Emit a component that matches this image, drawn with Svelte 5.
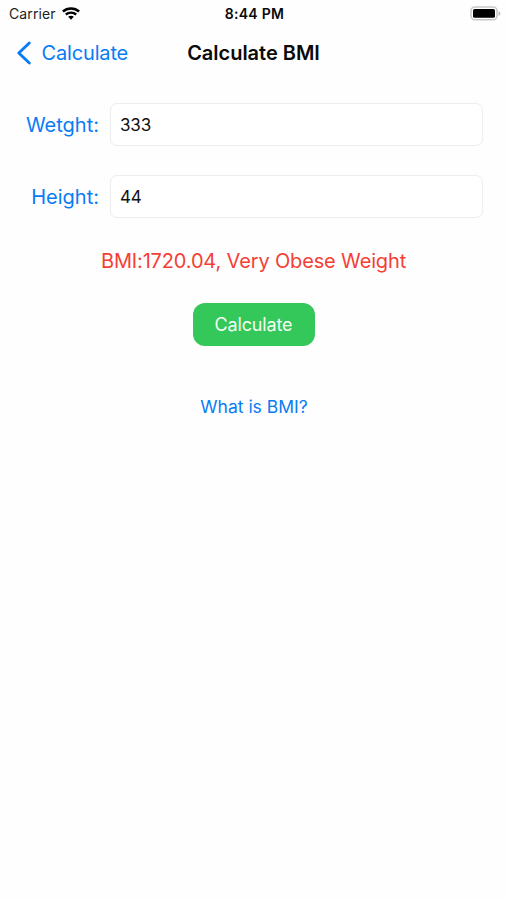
<script>
  let weight = $state('333');
  let height = $state('44');
</script>

<div class="screen">
  <header class="status">
    <div class="carrier">
      <span>Carrier</span>
      <svg width="18" height="14" viewBox="0 0 18 14" fill="none" stroke="#000">
        <path d="M.9 4.5C5.4.4 12.6.4 17.1 4.5" stroke-width="2.5" />
        <path d="M3.8 7.5c2.9-2.5 7.5-2.5 10.4 0" stroke-width="2.4" />
        <path d="M6.2 9.8c1.6-1.4 4-1.4 5.6 0L9 12.7z" fill="#000" stroke="none" />
      </svg>
    </div>
    <div class="time">8:44 PM</div>
    <div class="battery">
      <svg width="31" height="16" viewBox="0 0 31 16">
        <rect x="1" y="1" width="26" height="12.8" rx="4" fill="#fff" stroke="#c8c8c8" stroke-width="1.6" />
        <rect x="3" y="3" width="22" height="8.8" rx="1.6" fill="#000" />
        <path d="M28.6 5.2c2.2.7 2.2 4 0 4.7z" fill="#b5b5b5" />
      </svg>
    </div>
  </header>

  <nav class="bar">
    <a class="back" href="#back">
      <svg width="16" height="26" viewBox="0 0 16 26" fill="none">
        <path d="M13.3 3L2.8 13l10.5 10" stroke="#087cf5" stroke-width="2.9" stroke-linecap="round" stroke-linejoin="round" />
      </svg>
      <span>Calculate</span>
    </a>
    <h1>Calculate BMI</h1>
    <div></div>
  </nav>

  <main>
    <div class="row">
      <label for="weight">Wetght:</label>
      <input id="weight" bind:value={weight} />
    </div>
    <div class="row">
      <label for="height">Height:</label>
      <input id="height" bind:value={height} />
    </div>
    <p class="result">BMI:1720.04, Very Obese Weight</p>
    <button class="go">Calculate</button>
    <a class="what" href="#what">What is BMI?</a>
  </main>
</div>

<style>
  :global(body) {
    margin: 0;
    background: #fff;
  }
  .screen {
    width: 507px;
    height: 900px;
    overflow: hidden;
    background: #fefefe;
    font-family: Inter, 'Liberation Sans', sans-serif;
    color: #0a0a0a;
  }
  a {
    color: #087cf5;
    text-decoration: none;
  }
  .status {
    display: grid;
    grid-template-columns: 1fr auto 1fr;
    align-items: center;
    height: 27px;
    padding: 0 6px 0 9px;
    box-sizing: border-box;
    font-size: 14px;
  }
  .carrier {
    display: flex;
    align-items: center;
    gap: 6px;
    color: #222;
    letter-spacing: 0.12px;
  }
  .carrier svg,
  .battery svg,
  .back svg {
    display: block;
  }
  .time {
    font-weight: 600;
    letter-spacing: 0.3px;
    margin-right: 1px;
  }
  .battery {
    justify-self: end;
  }
  .bar {
    display: grid;
    grid-template-columns: 1fr auto 1fr;
    align-items: center;
    height: 50px;
    padding: 1px 16px 0;
    box-sizing: border-box;
  }
  .back {
    display: flex;
    align-items: center;
    gap: 9.5px;
    font-size: 20px;
    letter-spacing: -0.16px;
  }
  h1 {
    margin: 0;
    font-size: 20px;
    font-weight: 600;
    letter-spacing: -0.02px;
  }
  main {
    display: flex;
    flex-direction: column;
    padding-top: 26px;
  }
  .row {
    display: flex;
    align-items: center;
    height: 43px;
    margin-bottom: 29px;
  }
  label {
    width: 99px;
    margin-right: 11px;
    text-align: right;
    color: #087cf5;
    font-size: 20px;
  }
  input {
    width: 373px;
    height: 43px;
    box-sizing: border-box;
    padding: 0 9px;
    border: 1.5px solid #ededed;
    border-radius: 7px;
    outline: none;
    background: #fff;
    color: #111;
    font: 17px Inter, 'Liberation Sans', sans-serif;
    letter-spacing: -0.15px;
  }
  .result {
    margin: 0;
    height: 28px;
    line-height: 28px;
    text-align: center;
    font-size: 20px;
    letter-spacing: -0.15px;
    color: #f53f35;
  }
  .go {
    align-self: center;
    width: 122px;
    height: 43px;
    margin-top: 28px;
    border: 0;
    border-radius: 12px;
    background: #34c759;
    color: #f2fff5;
    font: 18px Inter, 'Liberation Sans', sans-serif;
    letter-spacing: -0.14px;
  }
  .what {
    align-self: center;
    margin: 49px 0 0 1px;
    line-height: 24px;
    font-size: 17.5px;
  }
</style>
